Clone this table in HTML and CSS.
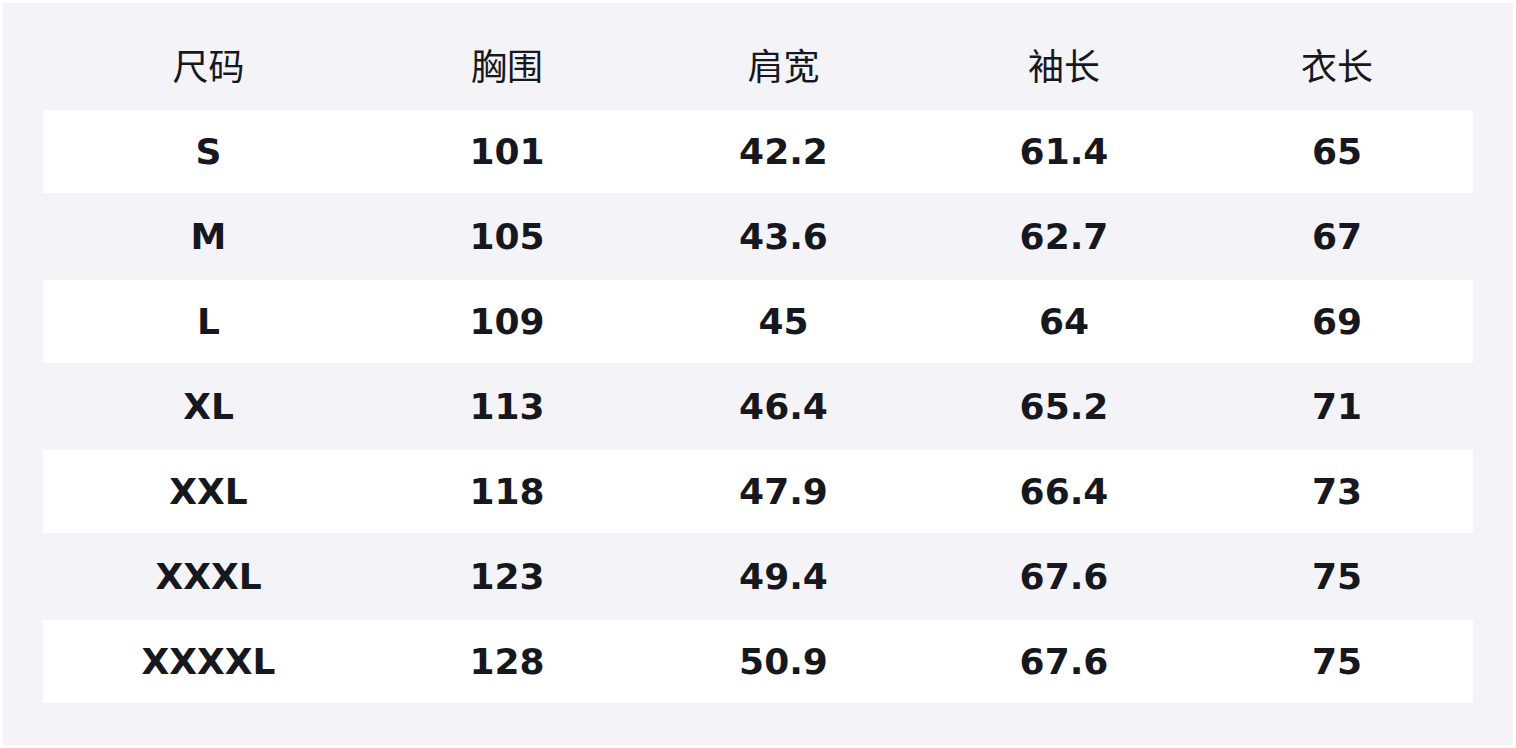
FILE: index.html
```html
<!DOCTYPE html>
<html lang="zh">
<head>
<meta charset="utf-8">
<title>尺码表</title>
<link rel="stylesheet" href="styles.css">
</head>
<body>
<div class="sheet">
  <div class="row head">
    <div>尺码</div><div>胸围</div><div>肩宽</div><div>袖长</div><div>衣长</div>
  </div>
  <div class="row odd"><div>S</div><div>101</div><div>42.2</div><div>61.4</div><div>65</div></div>
  <div class="row even"><div>M</div><div>105</div><div>43.6</div><div>62.7</div><div>67</div></div>
  <div class="row odd"><div>L</div><div>109</div><div>45</div><div>64</div><div>69</div></div>
  <div class="row even"><div>XL</div><div>113</div><div>46.4</div><div>65.2</div><div>71</div></div>
  <div class="row odd"><div>XXL</div><div>118</div><div>47.9</div><div>66.4</div><div>73</div></div>
  <div class="row even"><div>XXXL</div><div>123</div><div>49.4</div><div>67.6</div><div>75</div></div>
  <div class="row odd"><div>XXXXL</div><div>128</div><div>50.9</div><div>67.6</div><div>75</div></div>
</div>
</body>
</html>
```

FILE: styles.css
```css
html, body {
  margin: 0;
  padding: 0;
  background: #ffffff;
}
body {
  padding: 3px;
}
.sheet {
  width: 1510px;
  height: 742px;
  box-sizing: border-box;
  background: #f3f3f8;
  padding: 22px 40px 42px 40px;
  display: flex;
  flex-direction: column;
  font-family: "DejaVu Sans", "Noto Sans CJK SC", sans-serif;
  color: #17171e;
}
.row {
  display: grid;
  grid-template-columns: 331px 266px 287px 274px 272px;
  align-items: center;
  text-align: center;
  font-size: 36px;
  box-sizing: border-box;
}
.head {
  height: 85px;
  padding-bottom: 8px;
  font-family: "Noto Sans CJK SC", sans-serif;
  font-weight: 400;
}
.odd {
  height: 83px;
  background: #ffffff;
  font-weight: 700;
}
.even {
  height: 87px;
  font-weight: 700;
}
```
